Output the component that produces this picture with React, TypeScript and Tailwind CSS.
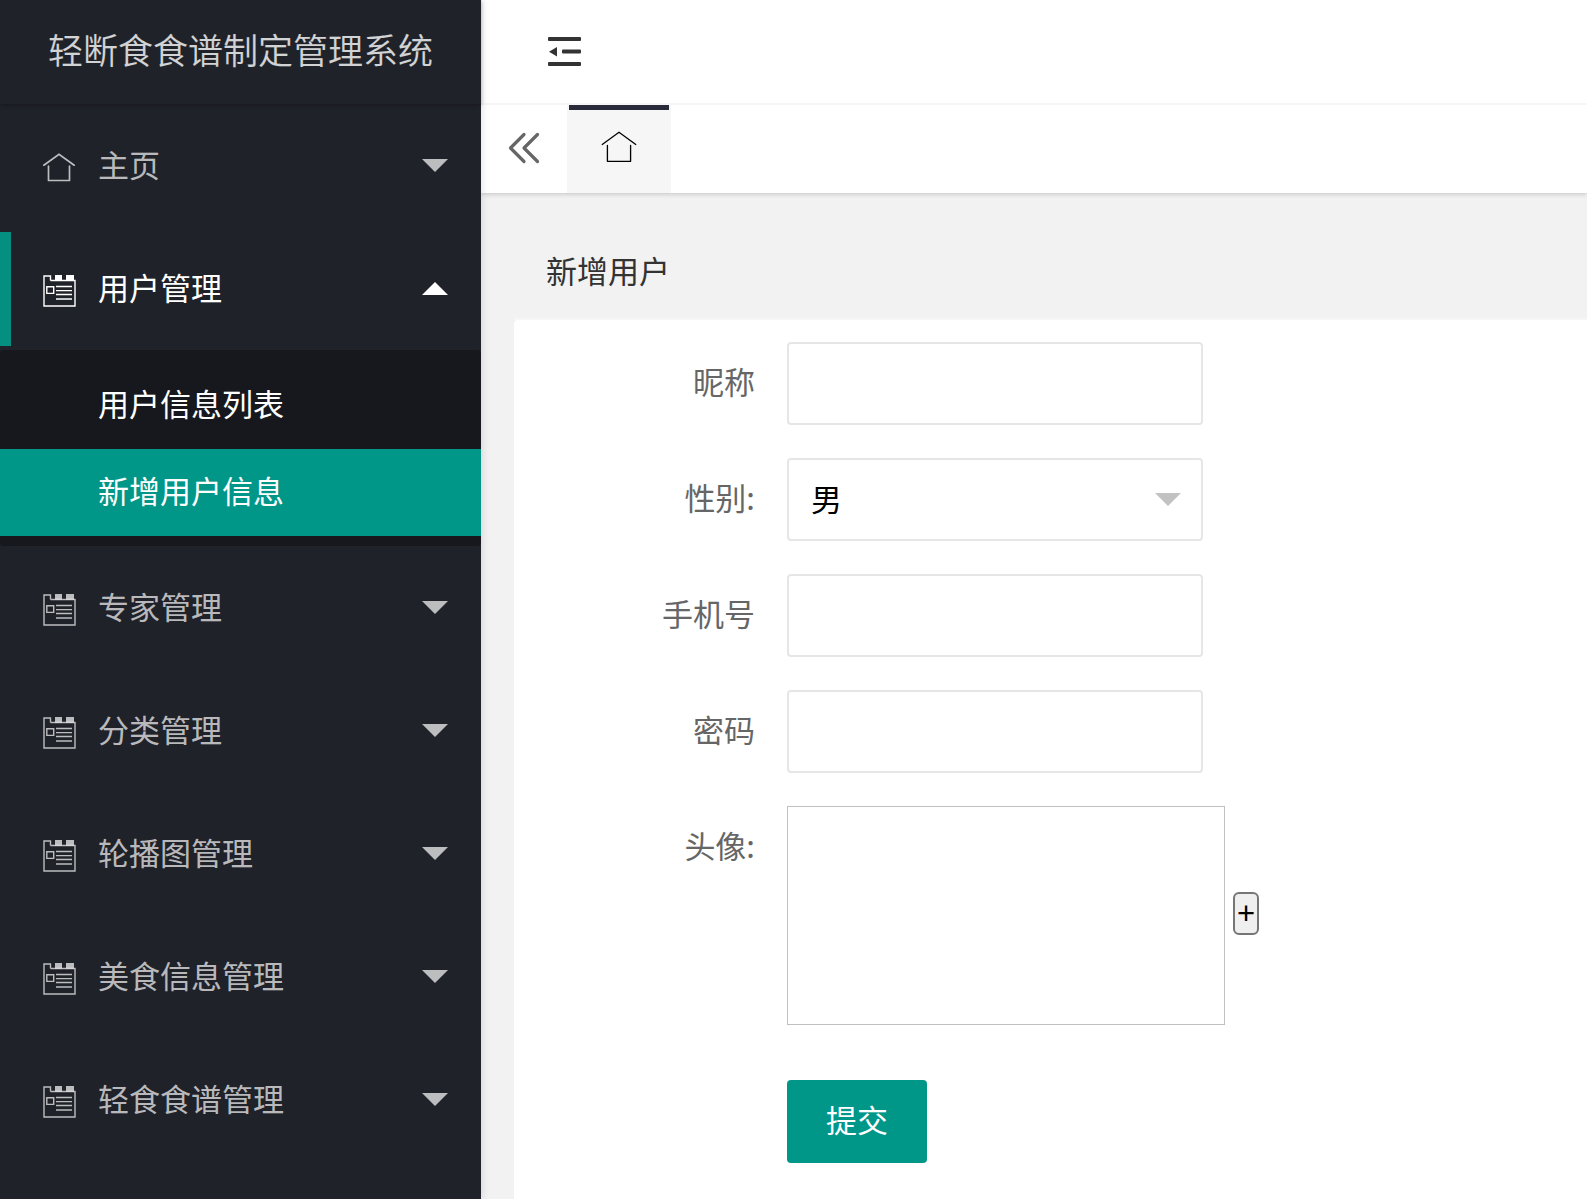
import React, { useState } from 'react';

const menus = [
  { title: '主页', icon: 'home' },
  { title: '用户管理', icon: 'form', children: ['用户信息列表', '新增用户信息'] },
  { title: '专家管理', icon: 'form' },
  { title: '分类管理', icon: 'form' },
  { title: '轮播图管理', icon: 'form' },
  { title: '美食信息管理', icon: 'form' },
  { title: '轻食食谱管理', icon: 'form' },
];

const HomeIcon = ({ className }) => (
  <svg className={className} viewBox="0 0 32 29" fill="none" stroke="currentColor" strokeLinecap="round">
    <path d="M.8 12.2 16 1.2l15.200 11" />
    <path d="M5.500 13v14.500h21V13" strokeLinejoin="round" />
  </svg>
);

const FormIcon = ({ className }) => (
  <svg className={className} viewBox="0 0 33 32" fill="none" stroke="currentColor" strokeWidth="1.400">
    <path d="M7.500 5.500V1H1v30h31V5.500H7.500" />
    <path d="M12 0h7v5.500h-7zM23 0h8v5.500h-8z" fill="currentColor" stroke="none" />
    <path d="M3.800 11.800h6.900v6.600H3.800z" />
    <path d="M13 11.500h16M13 15.600h16M13 19.500h16M13 24h16" />
  </svg>
);

const Caret = ({ up = false, className = '' }) => (
  <svg className={className} viewBox="0 0 26 13" fill="currentColor">
    <path d={up ? 'M0 13 13 0l13 13z' : 'M0 0h26L13 13z'} />
  </svg>
);

const Sidebar = () => {
  const [opened, setOpened] = useState('用户管理');
  const [active, setActive] = useState('新增用户信息');

  return (
    <aside className="relative z-10 w-[481px] shrink-0 bg-[#20222a] text-white/70 shadow-[1px_0_8px_rgba(0,0,0,0.12)]">
      <h1 className="flex h-[104px] items-center justify-center pb-1.5 text-[35px] font-[350] text-white/80 shadow-[0_1px_4px_rgba(0,0,0,0.3)]">
        轻断食食谱制定管理系统
      </h1>
      <nav>
        {menus.map((menu) => {
          const isOpen = opened === menu.title;
          return (
            <div key={menu.title}>
              <button
                type="button"
                className={`relative flex h-[123px] w-full items-center pr-[33px] pl-[43px] text-left ${isOpen ? 'text-white' : ''}`}
                onClick={() => setOpened(isOpen ? '' : menu.title)}
              >
                {isOpen && <span className="absolute top-[5px] bottom-1 left-0 w-[11px] bg-[#058f81]" />}
                {menu.icon === 'home' ? (
                  <HomeIcon className="mt-1 mr-[23px] h-[29px] w-8 stroke-[1.7]" />
                ) : (
                  <FormIcon className="mt-1 mr-[22px] h-8 w-[33px]" />
                )}
                <span className="flex-1 pb-1">{menu.title}</span>
                <Caret up={isOpen} className="h-[13px] w-[26px]" />
              </button>
              {isOpen && menu.children && (
                <div className="rounded-sm bg-[#17181d] pt-3 pb-2.5">
                  {menu.children.map((child) => (
                    <a
                      key={child}
                      href="#"
                      className={`flex h-[87px] items-center pb-1.5 pl-[98px] text-white ${active === child ? 'bg-[#009688]' : ''}`}
                      onClick={() => setActive(child)}
                    >
                      {child}
                    </a>
                  ))}
                </div>
              )}
            </div>
          );
        })}
      </nav>
    </aside>
  );
};

const Header = () => (
  <header className="bg-white shadow-[0_1px_5px_rgba(0,0,0,0.2)]">
    <div className="flex h-[105px] items-center border-b-2 border-[#f6f6f6] pl-[67px]">
      <button type="button" aria-label="侧边伸缩" className="text-[#333]">
        <svg className="h-[30px] w-[33px]" viewBox="0 0 33 30" fill="currentColor">
          <rect width="33" height="4" rx="1" />
          <rect x="14" y="12.500" width="19" height="4" rx="1" />
          <rect y="25" width="33" height="4" rx="1" />
          <path d="M1 14.800 9 10v9.600z" />
        </svg>
      </button>
    </div>
    <div className="flex h-[88px]">
      <button type="button" aria-label="上一页" className="flex w-[86px] items-center justify-center pb-0.5 text-[#666]">
        <svg className="h-8 w-8" viewBox="0 0 32 32" fill="none" stroke="currentColor" strokeWidth="3.200" strokeLinecap="round" strokeLinejoin="round">
          <path d="M16 2.500 2.500 16 16 29.500M29.500 2.500 16 16l13.500 13.500" />
        </svg>
      </button>
      <button type="button" aria-label="主页" className="relative flex w-[104px] items-center justify-center bg-[#f6f6f6] pb-1 text-black">
        <span className="absolute inset-x-0.5 top-0 h-[5px] bg-[#292b3a]" />
        <HomeIcon className="h-8 w-9 stroke-[1.2]" />
      </button>
    </div>
  </header>
);

const labelClass = 'flex h-[83px] w-[240px] shrink-0 items-center justify-end pr-8 pb-1.5 text-[#666]';
const fieldClass = 'h-[83px] w-[416px] rounded-sm border-2 border-[#e6e6e6] bg-white px-[22px] pb-1 outline-none';

const UserForm = () => (
  <form className="flex flex-col gap-[33px]" onSubmit={(e) => e.preventDefault()}>
    <div className="flex">
      <label htmlFor="nickname" className={labelClass}>昵称</label>
      <input id="nickname" type="text" className={fieldClass} />
    </div>
    <div className="flex">
      <label htmlFor="gender" className={labelClass}>性别:</label>
      <div className="relative">
        <select id="gender" defaultValue="男" className={`${fieldClass} appearance-none text-black`}>
          <option>男</option>
          <option>女</option>
        </select>
        <Caret className="pointer-events-none absolute top-[35px] right-[22px] h-[13px] w-[26px] text-[#c2c2c2]" />
      </div>
    </div>
    <div className="flex">
      <label htmlFor="phone" className={labelClass}>手机号</label>
      <input id="phone" type="text" className={fieldClass} />
    </div>
    <div className="flex">
      <label htmlFor="password" className={labelClass}>密码</label>
      <input id="password" type="password" className={fieldClass} />
    </div>
    <div className="flex">
      <label htmlFor="avatar" className={labelClass}>头像:</label>
      <div className="flex items-center gap-2">
        <div className="h-[219px] w-[438px] border border-[#c0c0c0]" />
        <button
          id="avatar"
          type="button"
          className="mb-1 flex h-[43px] w-[26px] items-center justify-center rounded-md border-2 border-[#767676] bg-[#efefef] font-['Liberation_Sans'] text-[31px] text-black"
        >
          +
        </button>
      </div>
    </div>
    <div className="mt-[22px] pl-[240px]">
      <button type="submit" className="h-[83px] w-[140px] rounded-sm bg-[#009688] pb-1.5 text-white">
        提交
      </button>
    </div>
  </form>
);

const App = () => (
  <div className="flex min-h-screen bg-[#f2f2f2] font-['Noto_Sans_CJK_SC',sans-serif] text-[31px] leading-[44px] text-[#333]">
    <Sidebar />
    <div className="flex min-w-0 flex-1 flex-col">
      <Header />
      <main className="flex flex-1 flex-col pt-[33px] pl-[33px]">
        <h2 className="flex h-[94px] items-center border-b-2 border-[#f6f6f6] pb-1 pl-8">新增用户</h2>
        <div className="flex-1 rounded-tl-sm bg-white py-[22px] pl-[33px]">
          <UserForm />
        </div>
      </main>
    </div>
  </div>
);

export default App;
